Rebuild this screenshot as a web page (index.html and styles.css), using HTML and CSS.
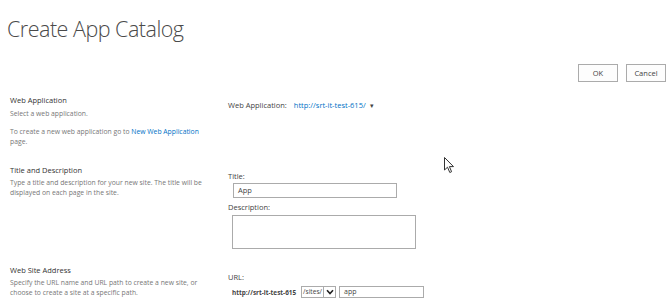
FILE: index.html
```html
<!DOCTYPE html>
<html lang="en">
<head>
    <meta charset="UTF-8">
    <title>Create App Catalog</title>
    <link rel="stylesheet" href="styles.css">
</head>
<body>
    <div class="page">
        <h1 class="page-title">Create App Catalog</h1>

        <div class="toolbar">
            <button class="ms-button">OK</button>
            <button class="ms-button">Cancel</button>
        </div>

        <div class="section section-webapp">
            <div class="section-info">
                <div class="section-heading">Web Application</div>
                <p class="section-desc">Select a web application.</p>
                <p class="section-desc gap">To create a new web application go to <a href="#" class="link">New Web Application</a> page.</p>
            </div>
            <div class="section-body">
                <div class="webapp-row">
                    <span class="field-label">Web Application:</span>
                    <a href="#" class="link webapp-link">http://srt-it-test-615/</a>
                    <span class="caret">&#9662;</span>
                </div>
            </div>
        </div>

        <div class="section section-title">
            <div class="section-info">
                <div class="section-heading">Title and Description</div>
                <p class="section-desc">Type a title and description for your new site. The title will be displayed on each page in the site.</p>
            </div>
            <div class="section-body">
                <div class="field-label">Title:</div>
                <div class="input title-input">App</div>
                <div class="field-label">Description:</div>
                <div class="input desc-input"></div>
            </div>
        </div>

        <div class="section section-url">
            <div class="section-info">
                <div class="section-heading">Web Site Address</div>
                <p class="section-desc">Specify the URL name and URL path to create a new site, or choose to create a site at a specific path.</p>
            </div>
            <div class="section-body">
                <div class="field-label">URL:</div>
                <div class="url-row">
                    <span class="url-prefix">http://srt-it-test-615</span>
                    <span class="path-select">
                        <span class="path-value">/sites/</span>
                        <span class="path-arrow">
                            <svg width="8" height="6" viewBox="0 0 8 6"><path d="M1 1.2 L4 4.5 L7 1.2" fill="none" stroke="#222" stroke-width="1.6"/></svg>
                        </span>
                    </span>
                    <span class="input url-input">app</span>
                </div>
            </div>
        </div>

        <svg class="cursor" width="12" height="18" viewBox="0 0 12 18">
            <path d="M0.5 0.5 L0.5 13 L3.5 10.2 L5.8 15.5 L7.6 14.7 L5.4 9.6 L9.5 9.6 Z" fill="#fff" stroke="#333" stroke-width="1"/>
        </svg>
    </div>
</body>
</html>
```

FILE: styles.css
```css
* {
    margin: 0;
    padding: 0;
    box-sizing: border-box;
}

body {
    font-family: "Open Sans", "Segoe UI", sans-serif;
    background: #fff;
    color: #444;
    width: 671px;
    height: 304px;
    overflow: hidden;
}

.page {
    position: relative;
    padding: 13px 0 0 0;
}

.page-title {
    font-weight: 300;
    font-size: 21.5px;
    line-height: 32px;
    color: #4a4a4a;
    padding-left: 7px;
    letter-spacing: -0.5px;
}

.toolbar {
    display: flex;
    justify-content: flex-end;
    gap: 8px;
    padding-right: 5px;
    margin-top: 19px;
}

.ms-button {
    font-family: inherit;
    font-size: 7.5px;
    color: #444;
    background: #fdfdfd;
    border: 1px solid #ababab;
    height: 18px;
    width: 40px;
}

.section {
    display: grid;
    grid-template-columns: 218px 1fr;
    padding-left: 10px;
}

.section-webapp {
    margin-top: 12px;
    height: 70px;
}

.section-title {
    height: 100px;
}

.section-info {
    padding-right: 12px;
}

.section-heading {
    font-size: 7.5px;
    line-height: 12px;
    color: #333;
    margin-bottom: 2px;
}

.section-desc {
    font-size: 6.8px;
    line-height: 10px;
    color: #777;
}

.section-webapp .section-heading {
    margin-bottom: 3px;
}

.section-desc.gap {
    margin-top: 8px;
}

.link {
    color: #0072c6;
    text-decoration: none;
}

.section-body {
    font-size: 7.5px;
    color: #444;
}

.webapp-row {
    display: flex;
    align-items: center;
    margin-top: 6px;
}

.webapp-link {
    margin-left: 7px;
}

.caret {
    font-size: 7px;
    margin-left: 4px;
    color: #444;
}

.field-label {
    line-height: 10px;
}

.section-title .section-body {
    padding-top: 7px;
}

.input {
    border: 1px solid #ababab;
    background: #fff;
    font-size: 7.5px;
    color: #444;
    padding: 0 4px;
    line-height: 13px;
}

.title-input {
    width: 164px;
    height: 15px;
    margin: 2px 0 4px 5px;
}

.desc-input {
    width: 184px;
    height: 34px;
    margin: 3px 0 0 4px;
}

.section-url .section-body {
    padding-top: 8px;
}

.url-row {
    display: flex;
    align-items: center;
    margin-top: 4px;
    margin-left: 4px;
}

.url-prefix {
    font-weight: 700;
    font-size: 6.4px;
    margin-right: 5px;
}

.path-select {
    display: flex;
    border: 1px solid #ababab;
    height: 12px;
    align-items: stretch;
}

.path-value {
    font-size: 6.6px;
    line-height: 10px;
    padding: 0 1px;
    width: 21px;
}

.path-arrow {
    display: flex;
    align-items: center;
    justify-content: center;
    width: 12px;
    border-left: 1px solid #ababab;
}

.url-input {
    width: 85px;
    height: 12px;
    line-height: 10px;
    font-size: 7px;
    margin-left: 3px;
}

.cursor {
    position: absolute;
    left: 444px;
    top: 157px;
}
```
